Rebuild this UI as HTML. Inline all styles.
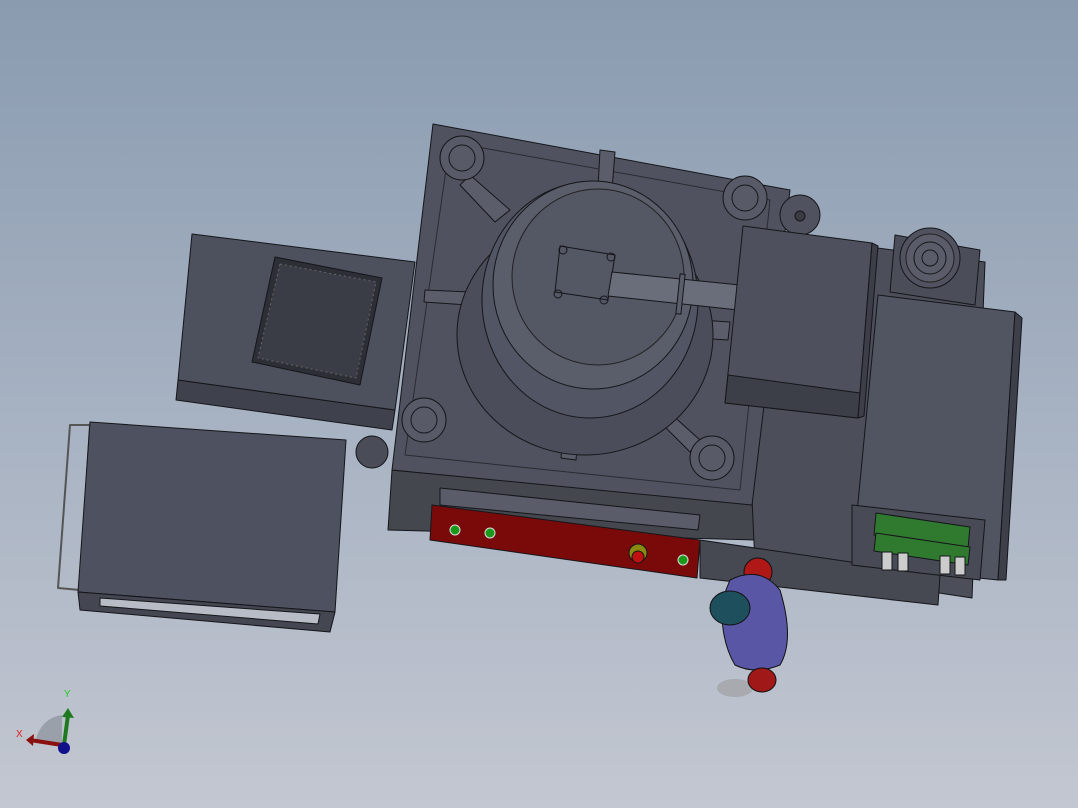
<!DOCTYPE html>
<html><head><meta charset="utf-8"><style>
html,body{margin:0;padding:0;width:1078px;height:808px;overflow:hidden;}
body{background:linear-gradient(#8a9bb0 0%,#a3afc0 45%,#c3c7d1 100%);}
svg{position:absolute;left:0;top:0}
</style></head><body>
<svg width="1078" height="808" viewBox="0 0 1078 808" stroke="#15161a" stroke-width="1" stroke-linejoin="round">
<!-- left table -->
<polygon points="70,425 90,425 80,590 58,588" fill="none" stroke="#555" stroke-width="2"/>
<polygon points="90,422 346,440 335,612 78,592" fill="#4e5160"/>
<polygon points="78,592 335,612 330,632 80,610" fill="#444652"/>
<polygon points="100,598 320,614 318,624 100,606" fill="#b7bcc6"/>
<!-- left panel -->
<polygon points="178,380 395,410 392,430 176,400" fill="#3f414c"/>
<polygon points="192,234 415,262 395,410 178,380" fill="#4d505d"/>
<polygon points="275,257 382,278 360,385 252,362" fill="#2d2f37"/>
<polygon points="280,264 376,282 356,378 258,358" fill="#3b3d46" stroke="#666" stroke-dasharray="2,3"/>
<!-- base under main -->
<polygon points="392,470 760,505 756,540 388,530" fill="#45474f"/>
<polygon points="740,230 985,262 972,598 755,565" fill="#4c4f5a"/>
<polygon points="700,540 940,575 938,605 700,578" fill="#464852"/>
<circle cx="372" cy="452" r="16" fill="#4a4c57"/>
<!-- main plate -->
<polygon points="433,124 790,190 752,505 392,470" fill="#50535f"/>
<polygon points="450,142 770,200 740,490 405,455" fill="none" stroke="#2a2b32"/>
<!-- ribs -->
<polygon points="470,175 510,210 495,222 460,185" fill="#5b5e6a"/>
<polygon points="600,150 615,152 612,190 598,188" fill="#5b5e6a"/>
<polygon points="425,290 470,292 468,305 424,302" fill="#5b5e6a"/>
<polygon points="650,395 700,440 690,452 640,402" fill="#5b5e6a"/>
<polygon points="565,410 580,412 576,460 561,458" fill="#5b5e6a"/>
<polygon points="700,320 730,322 728,340 698,338" fill="#5b5e6a"/>
<!-- corner bosses -->
<g fill="#585b67">
<circle cx="462" cy="158" r="22"/><circle cx="462" cy="158" r="13" fill="none"/>
<circle cx="745" cy="198" r="22"/><circle cx="745" cy="198" r="13" fill="none"/>
<circle cx="424" cy="420" r="22"/><circle cx="424" cy="420" r="13" fill="none"/>
<circle cx="712" cy="458" r="22"/><circle cx="712" cy="458" r="13" fill="none"/>
</g>
<circle cx="800" cy="215" r="20" fill="#50535f"/><circle cx="800" cy="216" r="5" fill="#3a3c44"/>
<!-- round body -->
<ellipse cx="585" cy="335" rx="128" ry="120" fill="#4b4e5a"/>
<ellipse cx="590" cy="300" rx="108" ry="118" fill="#525563"/>
<ellipse cx="593" cy="285" rx="100" ry="104" fill="#5a5d6a"/>
<ellipse cx="598" cy="277" rx="86" ry="88" fill="#545764" stroke="#222"/>
<polygon points="560,246 615,255 608,300 555,292" fill="#545764"/>
<circle cx="563" cy="250" r="4" fill="none"/><circle cx="611" cy="257" r="4" fill="none"/><circle cx="558" cy="294" r="4" fill="none"/><circle cx="604" cy="300" r="4" fill="none"/>
<polygon points="612,272 740,285 738,310 608,296" fill="#6a6d7a"/>
<rect x="678" y="274" width="5" height="40" fill="#5a5d6a" transform="rotate(6 680 294)"/>
<!-- box1 -->
<polygon points="743,226 872,243 858,418 725,403" fill="#4e515d"/>
<polygon points="728,375 860,393 858,418 725,403" fill="#3c3e48"/>
<polygon points="872,243 878,246 864,416 858,418" fill="#3c3e48"/>
<!-- fan -->
<polygon points="895,235 980,250 975,305 890,292" fill="#4b4e59"/>
<circle cx="930" cy="258" r="30" fill="#50535f"/>
<circle cx="930" cy="258" r="24" fill="#5a5d69" stroke="#222"/>
<circle cx="930" cy="258" r="16" fill="none"/><circle cx="930" cy="258" r="8" fill="none"/>
<!-- cabinet -->
<polygon points="878,295 1015,312 998,580 852,565" fill="#515461"/>
<polygon points="1015,312 1022,318 1006,580 998,580" fill="#3d3f49"/>
<polygon points="852,505 985,520 980,580 852,565" fill="#484a55"/>
<polygon points="876,513 970,527 968,548 874,535" fill="#2f7a2f"/>
<polygon points="876,533 970,547 968,565 874,551" fill="#2f7a2f"/>
<g fill="#ccc"><rect x="882" y="552" width="10" height="18"/><rect x="898" y="553" width="10" height="18"/><rect x="940" y="556" width="10" height="18"/><rect x="955" y="557" width="10" height="18"/></g>
<!-- slider strip -->
<polygon points="440,488 700,515 698,530 440,505" fill="#5a5d69"/>
<!-- red bar -->
<polygon points="432,505 700,540 697,578 430,540" fill="#7a0a0a"/>
<circle cx="455" cy="530" r="5" fill="#1a9a1a" stroke="#ddd"/>
<circle cx="490" cy="533" r="5" fill="#1a9a1a" stroke="#ddd"/>
<circle cx="683" cy="560" r="5" fill="#1a9a1a" stroke="#ddd"/>
<circle cx="638" cy="553" r="9" fill="#8a8a10"/><circle cx="638" cy="557" r="6" fill="#c01010"/>
<!-- person -->
<g stroke="#111">
<ellipse cx="735" cy="688" rx="18" ry="9" fill="#a8aab0" stroke="none"/>
<ellipse cx="758" cy="572" rx="14" ry="14" fill="#b01818"/>
<path d="M730 580 Q760 565 780 590 Q795 640 780 665 Q755 675 735 665 Q720 640 722 600 Z" fill="#5a56a6"/>
<ellipse cx="762" cy="680" rx="14" ry="12" fill="#a01818"/>
<ellipse cx="730" cy="608" rx="20" ry="17" fill="#1e4f5c"/>
</g>
<!-- axes -->
<path d="M62 745 L62 715 A30 30 0 0 0 36 740 Z" fill="#9aa0aa" stroke="none"/>
<line x1="62" y1="745" x2="30" y2="740" stroke="#8a1010" stroke-width="4"/>
<polygon points="26,740 34,734 33,746" fill="#8a1010" stroke="none"/>
<line x1="64" y1="745" x2="68" y2="715" stroke="#1f7a1f" stroke-width="4"/>
<polygon points="68,708 74,718 62,717" fill="#1f7a1f" stroke="none"/>
<circle cx="64" cy="748" r="6" fill="#10108a" stroke="none"/>
<text x="64" y="697" font-family="Liberation Sans" font-size="10" fill="#2c2" stroke="none">Y</text>
<text x="16" y="737" font-family="Liberation Sans" font-size="10" fill="#d22" stroke="none">X</text>
</svg>
</body></html>
